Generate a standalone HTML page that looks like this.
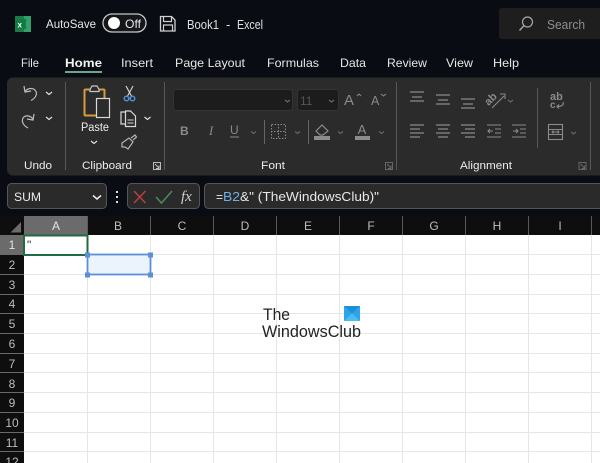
<!DOCTYPE html>
<html><head><meta charset="utf-8"><style>
html,body{margin:0;padding:0;background:#0a0c12;width:600px;height:463px;overflow:hidden}
svg{display:block;font-family:"Liberation Sans",sans-serif}
</style></head><body>
<svg width="600" height="463" viewBox="0 0 600 463" xmlns="http://www.w3.org/2000/svg">
<rect width="600" height="463" fill="#0a0c13"/>
<!-- title bar -->
<rect x="15" y="16" width="15" height="16" rx="1" fill="#1f7a4d"/>
<rect x="24" y="16" width="7" height="16" fill="#33a06c"/>
<rect x="15" y="19" width="11" height="10" fill="#107c41"/>
<text x="17.500" y="27.500" font-size="8" font-weight="bold" fill="#fff">x</text>
<text x="46" y="28" font-size="12" fill="#e8e8e8" textLength="50" lengthAdjust="spacingAndGlyphs">AutoSave</text>
<rect x="103" y="14" width="43" height="18" rx="9" fill="#15161a" stroke="#c8c8c8" stroke-width="1.300"/>
<circle cx="114" cy="23" r="6" fill="#fff"/>
<text x="125" y="28" font-size="12" fill="#e8e8e8" textLength="16" lengthAdjust="spacingAndGlyphs">Off</text>
<path d="M160.500 16.500h11l3.500 3.500v11h-14.500z" fill="none" stroke="#d0d0d0" stroke-width="1.300"/>
<path d="M163.500 16.500v5h8v-5M163.500 31v-6h9v6" fill="none" stroke="#d0d0d0" stroke-width="1.200"/>
<text x="187" y="29" font-size="13" fill="#e0e0e0" textLength="32" lengthAdjust="spacingAndGlyphs">Book1</text>
<text x="226" y="29" font-size="13" fill="#e0e0e0">-</text>
<text x="237" y="29" font-size="13" fill="#e0e0e0" textLength="26" lengthAdjust="spacingAndGlyphs">Excel</text>
<rect x="499" y="8" width="110" height="31" rx="3" fill="#1e1e1e"/>
<circle cx="527.500" cy="22" r="5" fill="none" stroke="#a8a8a8" stroke-width="1.200"/>
<path d="M523.800 25.800L519.500 30.500" stroke="#a8a8a8" stroke-width="1.400"/>
<text x="547" y="29" font-size="12.500" fill="#8e8e8e" textLength="38" lengthAdjust="spacingAndGlyphs">Search</text>
<!-- tabs -->
<g font-size="12" fill="#e6e6e6">
<text x="21" y="67" textLength="18" lengthAdjust="spacingAndGlyphs">File</text>
<text x="65" y="67" font-weight="bold" fill="#f2f2f2" textLength="37" lengthAdjust="spacingAndGlyphs">Home</text>
<text x="121" y="67" textLength="32" lengthAdjust="spacingAndGlyphs">Insert</text>
<text x="175" y="67" textLength="70" lengthAdjust="spacingAndGlyphs">Page Layout</text>
<text x="267" y="67" textLength="52" lengthAdjust="spacingAndGlyphs">Formulas</text>
<text x="340" y="67" textLength="26" lengthAdjust="spacingAndGlyphs">Data</text>
<text x="387" y="67" textLength="40" lengthAdjust="spacingAndGlyphs">Review</text>
<text x="446" y="67" textLength="27" lengthAdjust="spacingAndGlyphs">View</text>
<text x="493" y="67" textLength="26" lengthAdjust="spacingAndGlyphs">Help</text>
</g>
<rect x="65" y="71" width="37" height="2" fill="#6aa88d"/>
<!-- ribbon -->
<rect x="7" y="77.500" width="620" height="98" rx="6" fill="#2b2b2b"/>
<g stroke="#585858" stroke-width="1">
<path d="M65.500 82v88M164.500 82v88M396.500 82v88M537.500 88v60M590.500 82v88"/>
<path d="M264.500 120v24M308.500 120v24" stroke="#666"/>
</g>
<g font-size="11" fill="#ececec">
<text x="24" y="169" textLength="28" lengthAdjust="spacingAndGlyphs">Undo</text>
<text x="82" y="169" textLength="50" lengthAdjust="spacingAndGlyphs">Clipboard</text>
<text x="261" y="169" textLength="24" lengthAdjust="spacingAndGlyphs">Font</text>
<text x="460" y="169" textLength="52" lengthAdjust="spacingAndGlyphs">Alignment</text>
<text x="81" y="131" font-size="11.500" textLength="28" lengthAdjust="spacingAndGlyphs">Paste</text>
</g>
<!-- undo/redo -->
<g fill="none" stroke="#bcbcbc" stroke-width="1.200">
<path d="M24 86l1 6 6-1M25 91.500c3-4 9-4 11 0 1.500 3-1 7-5 9"/>
<path d="M34 114l-1 6-6-1M33 119c-3-4-8-4-10-1-2 4 1 8 5 10"/>
<path d="M46 92l3 2.500 3-2.500M46 117l3 2.500 3-2.500" stroke="#e0e0e0"/>
</g>
<!-- paste -->
<rect x="84.500" y="89.500" width="20" height="26" rx="1" fill="none" stroke="#d79b3c" stroke-width="2"/>
<path d="M90 89.500l2-3.500h5l2 3.500v2h-9z" fill="#2b2b2b" stroke="#c8c8c8" stroke-width="1.200"/>
<rect x="96.500" y="98.500" width="13" height="19" fill="#2b2b2b" stroke="#d8d8d8" stroke-width="1.200"/>
<path d="M91 141l3 2.500 3-2.500" fill="none" stroke="#e0e0e0" stroke-width="1.200"/>
<!-- cut -->
<path d="M126 86l6 11M133 86l-6 11" stroke="#d8d8d8" stroke-width="1.100" fill="none"/>
<circle cx="126.500" cy="98.500" r="2.300" fill="none" stroke="#4f8fd0" stroke-width="1.500"/>
<circle cx="132.500" cy="98.500" r="2.300" fill="none" stroke="#4f8fd0" stroke-width="1.500"/>
<!-- copy -->
<path d="M125 112h-4v12h4M125.500 111h5l5 5v10.500h-10z" fill="none" stroke="#d8d8d8" stroke-width="1.200"/>
<path d="M127.500 120h6M127.500 123h6" stroke="#d8d8d8"/>
<path d="M144.500 117l3 2.500 3-2.500" fill="none" stroke="#e0e0e0" stroke-width="1.200"/>
<!-- format painter -->
<path d="M122 143l7-5 4 4-5 7-3-2-3 0zM131 138l4-3 1.500 2-3.500 3" fill="none" stroke="#b4b4b4" stroke-width="1.200"/>
<path d="M153.500 162.500h7v7h-7zM155 164l4 4M159 165.500v3h-3" fill="none" stroke="#bbb"/>
<!-- font -->
<rect x="173.500" y="89.500" width="119" height="21" rx="3" fill="#1c1c1c" stroke="#333"/>
<path d="M285 100l2.500 2 2.500-2" fill="none" stroke="#6a6a6a" stroke-width="1.200"/>
<rect x="297.500" y="89.500" width="41" height="21" rx="3" fill="#1c1c1c" stroke="#333"/>
<text x="300" y="105" font-size="12" fill="#555">11</text>
<path d="M329 100l2.500 2 2.500-2" fill="none" stroke="#6a6a6a" stroke-width="1.200"/>
<text x="344" y="105" font-size="15" fill="#8a8a8a">A</text>
<path d="M357 96l2-2 2 2" fill="none" stroke="#8a8a8a"/>
<text x="371" y="105" font-size="12.500" fill="#8a8a8a">A</text>
<path d="M381 94l2.500 2 2.500-2" fill="none" stroke="#8a8a8a"/>
<text x="180" y="135" font-size="12" font-weight="bold" fill="#8a8a8a">B</text>
<text x="209" y="135" font-size="12.500" font-style="italic" fill="#8a8a8a" font-family="Liberation Serif">I</text>
<text x="230" y="134" font-size="12" fill="#8a8a8a">U</text>
<rect x="230" y="136.500" width="9" height="1" fill="#8a8a8a"/>
<rect x="271.500" y="124.500" width="14" height="14" fill="none" stroke="#8a8a8a" stroke-dasharray="1.500 1.500"/>
<path d="M278.500 124v15M271 131.500h15" stroke="#8a8a8a" stroke-dasharray="1.500 1.500"/>
<path d="M316 131l6-6 6 6-5 4h-3z" fill="none" stroke="#8a8a8a" stroke-width="1.200"/>
<rect x="314" y="136" width="16" height="4" fill="#8c8c8c"/>
<text x="362" y="134" font-size="13" fill="#8a8a8a" text-anchor="middle">A</text>
<rect x="355" y="136" width="15" height="4" fill="#8c8c8c"/>
<path d="M251 131.500l2.500 2 2.500-2M295 131.500l2.500 2 2.500-2M338 131.500l2.500 2 2.500-2M379 131.500l2.500 2 2.500-2M508 100l2.500 2 2.500-2M571 132l2.500 2 2.500-2" fill="none" stroke="#666" stroke-width="1.200"/>
<path d="M385.500 162.500h7v7h-7zM387 164l4 4M391 165.500v3h-3M579 162.500h7v7h-7zM580.500 164l4 4M584.500 165.500v3h-3" fill="none" stroke="#666"/>
<!-- alignment -->
<g stroke="#8a8a8a" stroke-width="1.300" fill="none">
<path d="M410 92h14M412 97h10M410 101h14"/>
<path d="M436 95h14M438 100h10M436 104h14"/>
<path d="M461 99h14M463 104h10M461 108h14"/>
<path d="M410 125h14M410 129h10M410 133h14M410 137h10"/>
<path d="M436 125h14M438 129h10M436 133h14M438 137h10"/>
<path d="M461 125h14M465 129h10M461 133h14M465 137h10"/>
<path d="M487 125h14M495 129h6M495 133h6M487 137h14M493 131h-5M490 129l-2 2 2 2" stroke-width="1.100"/>
<path d="M512 125h14M520 129h6M520 133h6M512 137h14M513 131h5M516 129l2 2-2 2" stroke-width="1.100"/>
<path d="M492 108l12-12M500 94h5v5" stroke-width="1.100"/>
<rect x="548.500" y="124.500" width="14" height="15" stroke-width="1.100"/>
<path d="M548 129.500h15M548 134.500h15M552 132h7M553.500 130.500l-1.500 1.500 1.500 1.500M557.500 130.500l1.500 1.500-1.500 1.500" stroke-width="1"/>
<path d="M563 102c1 3-1 4.500-6 4.500M559 104.500l-2 2 2 2" stroke-width="1.200"/>
</g>
<text x="484" y="103" font-size="11" font-weight="bold" fill="#8a8a8a" transform="rotate(-45 490 99)">ab</text>
<text x="550" y="100" font-size="11" font-weight="bold" fill="#8a8a8a">ab</text>
<text x="550" y="108" font-size="10" font-weight="bold" fill="#8a8a8a">c</text>
<!-- formula bar -->
<rect x="7.500" y="183.500" width="99" height="25" rx="4" fill="#2a2a2a" stroke="#565656"/>
<text x="14" y="201" font-size="12" fill="#ececec" textLength="27" lengthAdjust="spacingAndGlyphs">SUM</text>
<path d="M93 195.500l4 3.500 4-3.500" fill="none" stroke="#eee" stroke-width="1.500"/>
<rect x="116" y="191" width="2" height="2" fill="#ddd"/><rect x="116" y="196" width="2" height="2" fill="#ddd"/><rect x="116" y="201" width="2" height="2" fill="#ddd"/>
<rect x="127.500" y="183.500" width="72" height="25" rx="4" fill="#2a2a2a" stroke="#565656"/>
<path d="M134 191l11.500 12M145.500 191l-11.500 12" stroke="#b8403e" stroke-width="1.500" fill="none"/>
<path d="M156 197l5.500 6 10.500-12" stroke="#4f8a5f" stroke-width="1.500" fill="none"/>
<text x="181" y="201" font-size="15" font-style="italic" fill="#d0d0d0" font-family="Liberation Serif">fx</text>
<rect x="204.500" y="183.500" width="420" height="25" rx="4" fill="#2a2a2a" stroke="#565656"/>
<text x="216" y="201" font-size="12" fill="#e8e8e8">=</text>
<text x="223" y="201" font-size="12.500" fill="#6fb0e0" textLength="17" lengthAdjust="spacingAndGlyphs">B2</text>
<text x="240" y="201" font-size="12.500" fill="#e8e8e8" textLength="139" lengthAdjust="spacingAndGlyphs">&amp;" (TheWindowsClub)"</text>
<!-- sheet -->
<rect x="24" y="235" width="576" height="228" fill="#fff"/>
<rect x="0" y="216" width="600" height="19" fill="#0e0e0e"/>
<rect x="0" y="235" width="24" height="228" fill="#0e0e0e"/>
<rect x="24" y="216" width="63" height="19" fill="#6b6b6b"/>
<rect x="0" y="235" width="24" height="19.500" fill="#6b6b6b"/>
<path d="M21 222v10.500h-10.500z" fill="#6b6b6b"/>
<path d="M87.500 216v19M150.500 216v19M213.500 216v19M276.500 216v19M339.500 216v19M402.500 216v19M465.500 216v19M528.500 216v19M591.500 216v19" stroke="#5a5a5a"/>
<path d="M87.500 235v228M150.500 235v228M213.500 235v228M276.500 235v228M339.500 235v228M402.500 235v228M465.500 235v228M528.500 235v228M591.500 235v228M24 254.500h576M24 274.500h576M24 294.500h576M24 313.500h576M24 333.500h576M24 353.500h576M24 372.500h576M24 392.500h576M24 412.500h576M24 432.500h576M24 451.500h576" stroke="#e6e6e6"/>
<path d="M0 254.500h24M0 274.500h24M0 294.500h24M0 313.500h24M0 333.500h24M0 353.500h24M0 372.500h24M0 392.500h24M0 412.500h24M0 432.500h24M0 451.500h24" stroke="#6a6a6a"/>
<g font-size="12" fill="#bdbdbd" text-anchor="middle">
<text x="56" y="230" fill="#e4e4e4">A</text><text x="118" y="230">B</text><text x="182" y="230">C</text><text x="245" y="230">D</text><text x="308" y="230">E</text><text x="371" y="230">F</text><text x="434" y="230">G</text><text x="497" y="230">H</text><text x="560" y="230">I</text>
<text x="12" y="249" fill="#e4e4e4">1</text><text x="12" y="269">2</text><text x="12" y="289">3</text><text x="12" y="308">4</text><text x="12" y="328">5</text><text x="12" y="348">6</text><text x="12" y="368">7</text><text x="12" y="388">8</text><text x="12" y="407">9</text><text x="12" y="427">10</text><text x="12" y="447">11</text><text x="12" y="466">12</text>
</g>
<rect x="24" y="235.500" width="63.500" height="19.500" fill="#fff" stroke="#1f6b45" stroke-width="2"/>
<text x="27" y="249" font-size="12" fill="#333">"</text>
<rect x="87.500" y="254.500" width="63" height="20" fill="#ebf3fc" stroke="#5b8fd6" stroke-width="1.800"/>
<rect x="85" y="252.500" width="5" height="5" fill="#5b8fd6"/><rect x="148" y="252.500" width="5" height="5" fill="#5b8fd6"/><rect x="85" y="272.500" width="5" height="5" fill="#5b8fd6"/><rect x="148" y="272.500" width="5" height="5" fill="#5b8fd6"/>
<!-- logo -->
<text x="263" y="320" font-size="16.500" fill="#222" textLength="27" lengthAdjust="spacingAndGlyphs">The</text>
<text x="262" y="337" font-size="16.500" fill="#222" textLength="99" lengthAdjust="spacingAndGlyphs">WindowsClub</text>
<rect x="344" y="306" width="16" height="15" fill="#2ba6ea"/>
<path d="M344 306l8 7.500 8-7.500z" fill="#1e8fd6"/>
<path d="M344 321l8-7.500 8 7.500z" fill="#4dbdf5"/>
</svg>
</body></html>
